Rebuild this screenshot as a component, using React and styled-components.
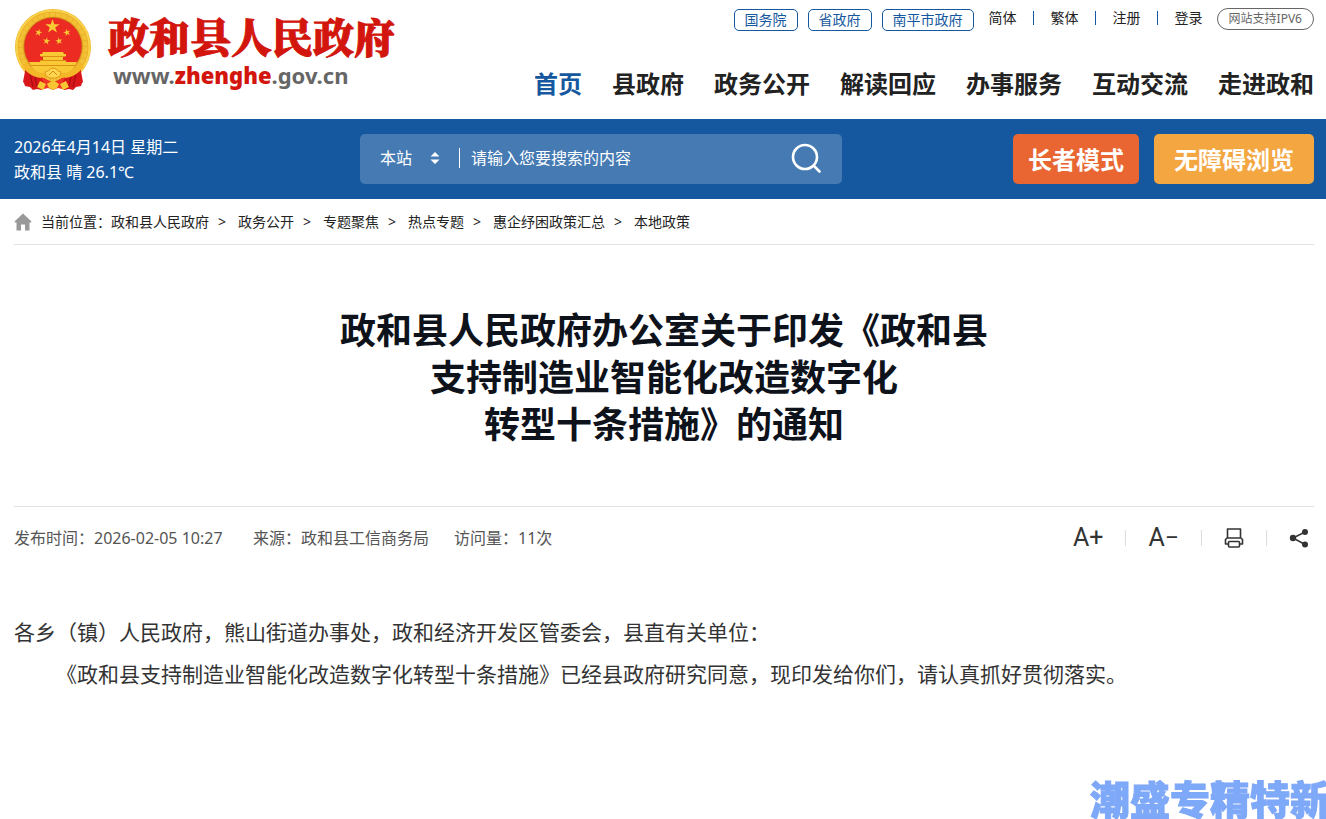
import React from "react";
import styled, { createGlobalStyle } from "styled-components";

const Global = createGlobalStyle`
  * { box-sizing: border-box; }
  body {
    margin: 0;
    background: #fff;
    color: #222;
    font-family: "Noto Sans", "Noto Sans CJK SC", sans-serif;
    font-size: 14px;
    line-height: 20px;
  }
  a { color: inherit; text-decoration: none; }
  button, input, select { font-family: inherit; }
`;

const Wrap = styled.div`
  padding: 0 12px 0 14px;
`;

const Header = styled(Wrap).attrs({ as: "header" })`
  display: flex;
  justify-content: space-between;
  height: 119px;
`;

const Brand = styled.a`
  display: flex;
  gap: 16px;
  padding-top: 8px;
`;

const BrandText = styled.span`
  display: flex;
  flex-direction: column;
`;

const BrandName = styled.span`
  color: #d3160d;
  font-family: "Noto Serif CJK SC", "Noto Sans CJK SC", serif;
  font-size: 41px;
  font-weight: 900;
  line-height: 56px;
  white-space: nowrap;
  -webkit-text-stroke: 1px #d3160d;
`;

const BrandUrl = styled.span`
  padding-left: 5px;
  color: #666;
  font-size: 22px;
  font-weight: 700;
  line-height: 22px;
  b { color: #d3160d; }
`;

const HeaderRight = styled.div`
  display: flex;
  flex-direction: column;
  align-items: flex-end;
  gap: 33px;
  padding-top: 8px;
`;

const TopLinks = styled.div`
  display: flex;
  align-items: flex-start;
  white-space: nowrap;
`;

const Chip = styled.a`
  height: 22px;
  margin: 1px 10px 0 0;
  padding: 0 10px;
  border: 1px solid #1558a0;
  border-radius: 5px;
  color: #1558a0;
`;

const Bar = styled.i`
  width: 1px;
  height: ${(p) => p.$height || 14}px;
  background: ${(p) => p.$color || "#1558a0"};
`;

const Languages = styled.div`
  display: flex;
  align-items: center;
  gap: 16px;
  margin: 0 14px 0 5px;
  ${Bar} { margin-right: 1px; }
`;

const Pill = styled.a`
  height: 22px;
  padding: 0 11px;
  border: 1px solid #666;
  border-radius: 11px;
  color: #666;
  font-size: 12px;
`;

const Nav = styled.nav`
  display: flex;
  gap: 30px;
`;

const NavLink = styled.a`
  color: ${(p) => (p.$active ? "#1558a0" : "#222")};
  font-size: 24px;
  font-weight: 700;
  line-height: 40px;
  white-space: nowrap;
`;

const BlueBar = styled.section`
  background: #1558a0;
`;

const BlueInner = styled(Wrap)`
  display: grid;
  grid-template-columns: 346px 482px 1fr;
  align-items: center;
  height: 80px;
`;

const Weather = styled.div`
  padding-top: 2px;
  color: #fff;
  font-size: 16px;
  line-height: 25px;
`;

const Search = styled.form`
  display: flex;
  align-items: center;
  height: 50px;
  padding: 0 20px 2px;
  border-radius: 5px;
  background: #457ab3;
  color: #fff;
`;

const SelectBox = styled.label`
  display: grid;
  grid-template-columns: 1fr 10px;
  align-items: center;
  width: 60px;
  margin-right: 19px;
`;

const Select = styled.select`
  appearance: none;
  padding: 0;
  border: 0;
  background: transparent;
  color: #fff;
  font-size: 16px;
  line-height: 24px;
`;

const SearchInput = styled.input`
  flex: 1;
  min-width: 0;
  padding: 0 11px;
  border: 0;
  outline: 0;
  background: transparent;
  color: #fff;
  font-size: 16px;
  line-height: 24px;
  &::placeholder { color: #fff; opacity: 1; }
`;

const IconButton = styled.button`
  display: flex;
  align-items: center;
  justify-content: center;
  padding: 0;
  border: 0;
  background: transparent;
  color: #333;
  cursor: pointer;
`;

const Modes = styled.div`
  display: flex;
  justify-content: flex-end;
  gap: 15px;
`;

const ModeButton = styled.button`
  height: 50px;
  padding: 0 ${(p) => p.$pad}px 2px;
  border: 0;
  border-radius: 5px;
  background: ${(p) => p.$bg};
  color: #fff;
  font-size: 24px;
  font-weight: 700;
  white-space: nowrap;
  cursor: pointer;
`;

const Crumbs = styled.nav`
  display: flex;
  align-items: center;
  height: 46px;
  border-bottom: 1px solid #e3e3e3;
  svg { margin-right: 9px; }
`;

const Sep = styled.span`
  margin: 0 12px 0 9px;
`;

const Title = styled.h1`
  margin: 0;
  padding: 62px 0 58px;
  color: #0e121b;
  font-size: 36px;
  font-weight: 700;
  line-height: 47px;
  text-align: center;
`;

const Meta = styled.div`
  display: flex;
  align-items: center;
  justify-content: space-between;
  height: 62px;
  border-top: 1px solid #e3e3e3;
  color: #555;
  font-size: 16px;
`;

const MetaItems = styled.div`
  display: grid;
  grid-template-columns: 214px auto auto;
  column-gap: 25px;
`;

const Tools = styled.div`
  display: flex;
  align-items: center;
  gap: 22px;
  padding-right: 5px;
`;

const SizeButton = styled(IconButton)`
  font-family: Roboto, sans-serif;
  font-size: 25px;
  line-height: 28px;
`;

const Article = styled.article`
  padding: 43px 0 122px;
  color: #333;
  font-size: 21px;
  line-height: 42px;
  p { margin: 0; }
  p + p { text-indent: 2em; }
`;

const Floating = styled.a`
  position: fixed;
  right: -4px;
  bottom: -3px;
  color: #7ea8f8;
  font-size: 40px;
  font-weight: 900;
  line-height: 44px;
  white-space: nowrap;
  -webkit-text-stroke: 1px #7ea8f8;
`;

const star = (cx, cy, r, turn = 0) =>
  Array.from({ length: 10 }, (_, i) => {
    const a = ((i * 36 - 90 + turn) * Math.PI) / 180;
    const d = i % 2 ? r * 0.38 : r;
    return `${(cx + d * Math.cos(a)).toFixed(1)},${(cy + d * Math.sin(a)).toFixed(1)}`;
  }).join(" ");

const Emblem = () => (
  <svg width="78" height="84" viewBox="0 0 78 84" aria-hidden="true">
    <circle cx="39" cy="39" r="38" fill="#ebb02a" />
    <circle cx="39" cy="39" r="36.500" fill="none" stroke="#f8d34a" strokeWidth="2" />
    <circle cx="39" cy="39" r="32.500" fill="none" stroke="#f3c136" strokeWidth="4" strokeDasharray="5 1" />
    <circle cx="39" cy="38.500" r="29.500" fill="#c98412" />
    <circle cx="39" cy="38.500" r="28.700" fill="#ec2b23" />
    <g fill="#f9c935">
      <polygon points={star(38.5, 18.5, 7.6)} />
      <polygon points={star(24.5, 24.5, 3.8, 15)} />
      <polygon points={star(53, 24.5, 3.8, -15)} />
      <polygon points={star(32.5, 33, 3.8, 10)} />
      <polygon points={star(45, 33, 3.8, -10)} />
      <path d="M29 44h20l1 2h2v2l-3 1v3h2l2 3H25l2-3h2v-3l-3-1v-2h2z" />
      <path d="M15 54h48c-2 5-6 9-10 11H25c-4-2-8-6-10-11z" />
    </g>
    <path d="M28 48.500h22M26 52.500h26M16 57.500h46" stroke="#dc8f17" strokeWidth="1" />
    <path d="M12 58c3 4 8 8 15 10l6 4-5 10-5-1-4 1-3-3-5-1-1-3-1-1z" fill="#d9171b" />
    <path d="M66 58c-3 4-8 8-15 10l-6 4 5 10 5-1 4 1 3-3 5-1 1-3 1-1z" fill="#d9171b" />
    <path d="M16 66l3 13M21 68l2 11M62 66l-3 13M57 68l-2 11" stroke="#a90d13" strokeWidth="1.3" />
    <path d="M10 57c7 9 15 12 23 10M68 57c-7 9-15 12-23 10" fill="none" stroke="#f3b727" strokeWidth="5" />
    <path d="M27 69l9 4h6l9-4-3 7 4 6-8-2-5 2-5-2-8 2 4-6z" fill="#ef3525" />
    <path d="M26 73l6 3-3 6-6-3zM52 73l-6 3 3 6 6-3zM33 76l6-4 6 4-2 4-4 2-4-2z" fill="#f7c632" />
    <path d="M31 64l3-1 2-2 3-1 3 1 2 2 3 1-1 4-4 2h-6l-4-2z" fill="#ffd64d" stroke="#d98b19" strokeWidth=".8" />
    <path d="M35 67l4-4 4 4" fill="none" stroke="#d98b19" />
  </svg>
);

const crumbs = ["政和县人民政府", "政务公开", "专题聚焦", "热点专题", "惠企纾困政策汇总", "本地政策"];
const navItems = ["首页", "县政府", "政务公开", "解读回应", "办事服务", "互动交流", "走进政和"];
const languages = ["简体", "繁体", "注册", "登录"];

export default function App() {
  return (
    <>
      <Global />
      <Header>
        <Brand href="#">
          <Emblem />
          <BrandText>
            <BrandName>政和县人民政府</BrandName>
            <BrandUrl>www.<b>zhenghe</b>.gov.cn</BrandUrl>
          </BrandText>
        </Brand>
        <HeaderRight>
          <TopLinks>
            <Chip href="#">国务院</Chip>
            <Chip href="#">省政府</Chip>
            <Chip href="#">南平市政府</Chip>
            <Languages>
              {languages.map((t, i) => (
                <React.Fragment key={t}>
                  {i > 0 && <Bar />}
                  <a href="#">{t}</a>
                </React.Fragment>
              ))}
            </Languages>
            <Pill href="#">网站支持IPV6</Pill>
          </TopLinks>
          <Nav>
            {navItems.map((t, i) => (
              <NavLink key={t} href="#" $active={i === 0}>{t}</NavLink>
            ))}
          </Nav>
        </HeaderRight>
      </Header>

      <BlueBar>
        <BlueInner>
          <Weather>
            <div>2026年4月14日 星期二</div>
            <div>政和县 晴 26.1℃</div>
          </Weather>
          <Search onSubmit={(e) => e.preventDefault()}>
            <SelectBox>
              <Select aria-label="搜索范围">
                <option>本站</option>
              </Select>
              <svg width="10" height="14" viewBox="0 0 10 14" fill="#fff" aria-hidden="true">
                <path d="M5 1l4.500 4.500h-9zM5 13L.5 8.500h9z" />
              </svg>
            </SelectBox>
            <Bar $height={20} $color="#fff" />
            <SearchInput aria-label="搜索内容" placeholder="请输入您要搜索的内容" />
            <IconButton type="submit" aria-label="搜索">
              <svg width="32" height="32" viewBox="0 0 32 32" fill="none" stroke="#fff" strokeWidth="2.6" strokeLinecap="round">
                <circle cx="15" cy="15" r="12" />
                <path d="M24 24l5.500 5.500" />
              </svg>
            </IconButton>
          </Search>
          <Modes>
            <ModeButton type="button" $bg="#e96632" $pad={15}>长者模式</ModeButton>
            <ModeButton type="button" $bg="#f4a641" $pad={20}>无障碍浏览</ModeButton>
          </Modes>
        </BlueInner>
      </BlueBar>

      <Wrap as="main">
        <Crumbs>
          <svg width="18" height="18" viewBox="0 0 18 18" fill="#999" aria-hidden="true">
            <path d="M9 .5L17.500 8.500l-.5 1H15.500V17.500H11v-6H7v6H2.500v-8H1l-.5-1z" />
          </svg>
          <span>当前位置：</span>
          {crumbs.map((t, i) => (
            <React.Fragment key={t}>
              {i > 0 && <Sep>&gt;</Sep>}
              <a href="#">{t}</a>
            </React.Fragment>
          ))}
        </Crumbs>
        <Title>
          政和县人民政府办公室关于印发《政和县<br />
          支持制造业智能化改造数字化<br />
          转型十条措施》的通知
        </Title>
        <Meta>
          <MetaItems>
            <span>发布时间：2026-02-05 10:27</span>
            <span>来源：政和县工信商务局</span>
            <span>访问量：11次</span>
          </MetaItems>
          <Tools>
            <SizeButton type="button" aria-label="放大字号">A+</SizeButton>
            <Bar $height={16} $color="#ddd" />
            <SizeButton type="button" aria-label="缩小字号">A−</SizeButton>
            <Bar $height={16} $color="#ddd" />
            <IconButton type="button" aria-label="打印">
              <svg width="20" height="20" viewBox="0 0 20 20" fill="none" stroke="#333" strokeWidth="1.6" strokeLinejoin="round">
                <path d="M3.500 10V1h13v9M4.500 16H1.500v-4.500l1.500-1.500h14l1.500 1.500V16h-3" />
                <rect x="4.500" y="13.500" width="11" height="5.500" rx="1" />
              </svg>
            </IconButton>
            <Bar $height={16} $color="#ddd" />
            <IconButton type="button" aria-label="分享">
              <svg width="20" height="20" viewBox="0 0 20 20" aria-hidden="true">
                <path d="M16 4L4 10l12 6.500" fill="none" stroke="#333" strokeWidth="1.5" />
                <g fill="#333">
                  <circle cx="16" cy="4" r="3" />
                  <circle cx="4" cy="10" r="3.200" />
                  <circle cx="16" cy="16.500" r="3" />
                </g>
              </svg>
            </IconButton>
          </Tools>
        </Meta>
        <Article>
          <p>各乡（镇）人民政府，熊山街道办事处，政和经济开发区管委会，县直有关单位：</p>
          <p>《政和县支持制造业智能化改造数字化转型十条措施》已经县政府研究同意，现印发给你们，请认真抓好贯彻落实。</p>
        </Article>
      </Wrap>
      <Floating href="#">潮盛专精特新</Floating>
    </>
  );
}
